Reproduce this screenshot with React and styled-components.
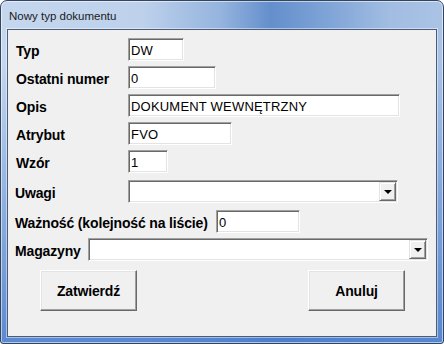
import React from 'react'
import styled, { createGlobalStyle } from 'styled-components'

const GlobalStyle = createGlobalStyle`
  html, body {
    margin: 0;
    padding: 0;
    background: #ffffff;
  }
  body {
    font-family: "Liberation Sans", Arial, sans-serif;
  }
  * {
    box-sizing: border-box;
  }
`

const Window = styled.div`
  width: 444px;
  height: 344px;
  display: flex;
  flex-direction: column;
  border: 1px solid #34465f;
  border-radius: 7px 7px 3px 3px;
  overflow: hidden;
  background:
    linear-gradient(180deg, rgba(72, 124, 204, 0) 0px, rgba(72, 124, 204, 0) 60px, rgba(72, 124, 204, 0.85) 100%),
    linear-gradient(90deg, #c5d7ee 0%, #bdd1eb 32%, #94b3de 50%, #648fcc 61%, #7fa4d7 74%, #a2bde2 88%, #aac3e5 100%);
  box-shadow: inset 0 0 0 1px rgba(255, 255, 255, 0.55);
`

const TitleBar = styled.div`
  height: 28px;
  flex-shrink: 0;
  display: flex;
  align-items: center;
  padding: 2px 0 0 8px;
  font-size: 11.5px;
  color: #1b1b1b;
`

const Client = styled.div`
  flex: 1;
  margin: 0 6px 6px 6px;
  border: 1px solid #4a5c7a;
  box-shadow: 0 0 0 1px rgba(255, 255, 255, 0.45);
  background: #f0f0f0;
  padding-top: 8px;
  display: flex;
  flex-direction: column;
  gap: 5px;
`

const Row = styled.div`
  display: flex;
  align-items: center;
  height: 23px;
  padding-left: ${p => p.$indent}px;
  margin-top: ${p => p.$push || 0}px;
`

const Label = styled.label`
  width: ${p => p.$width}px;
  flex-shrink: 0;
  padding-top: 2px;
  font-size: 14px;
  font-weight: bold;
  letter-spacing: -0.15px;
  color: #000000;
  white-space: nowrap;
`

const Sunken = styled.div`
  width: ${p => p.$width}px;
  height: 23px;
  display: flex;
  align-items: stretch;
  background: #ffffff;
  border-top: 1px solid #a0a0a0;
  border-left: 1px solid #a0a0a0;
  border-bottom: 1px solid #ffffff;
  border-right: 1px solid #ffffff;
  box-shadow: inset 1px 1px 0 #696969, inset -1px -1px 0 #e3e3e3;
`

const Field = styled.input`
  flex: 1;
  min-width: 0;
  border: none;
  outline: none;
  background: transparent;
  padding: 1px 0 0 2px;
  font-family: "Liberation Sans", Arial, sans-serif;
  font-size: 13px;
  letter-spacing: 0.2px;
  color: #000000;
`

const DropButton = styled.div`
  width: 17px;
  margin: 1px 1px 1px 0;
  display: flex;
  align-items: center;
  justify-content: center;
  background: #f0f0f0;
  border-top: 1px solid #e3e3e3;
  border-left: 1px solid #e3e3e3;
  border-bottom: 1px solid #696969;
  border-right: 1px solid #696969;
  box-shadow: inset 1px 1px 0 #ffffff, inset -1px -1px 0 #a0a0a0;
`

const Arrow = styled.span`
  width: 0;
  height: 0;
  margin-top: 1px;
  border-left: 4px solid transparent;
  border-right: 4px solid transparent;
  border-top: 4px solid #000000;
`

const ButtonBar = styled.div`
  display: flex;
  gap: 171px;
  padding-left: 32px;
  margin-top: 4px;
`

const Button = styled.button`
  width: 97px;
  height: 41px;
  padding: 0;
  background: #f0f0f0;
  border-top: 1px solid #ffffff;
  border-left: 1px solid #ffffff;
  border-bottom: 1px solid #696969;
  border-right: 1px solid #696969;
  box-shadow: inset -1px -1px 0 #a0a0a0, inset 1px 1px 0 #e3e3e3;
  font-family: "Liberation Sans", Arial, sans-serif;
  font-size: 14px;
  font-weight: bold;
  letter-spacing: -0.15px;
  color: #000000;
`

const TextRow = ({ label, value, width, labelWidth = 112, indent = 8, push }) => (
  <Row $indent={indent} $push={push}>
    <Label $width={labelWidth}>{label}</Label>
    <Sunken $width={width}>
      <Field defaultValue={value} readOnly />
    </Sunken>
  </Row>
)

const ComboRow = ({ label, width, labelWidth, indent = 7, push }) => (
  <Row $indent={indent} $push={push}>
    <Label $width={labelWidth}>{label}</Label>
    <Sunken $width={width}>
      <Field defaultValue="" readOnly />
      <DropButton>
        <Arrow />
      </DropButton>
    </Sunken>
  </Row>
)

export default function App() {
  return (
    <>
      <GlobalStyle />
      <Window>
        <TitleBar>Nowy typ dokumentu</TitleBar>
        <Client>
          <TextRow label="Typ" value="DW" width={56} />
          <TextRow label="Ostatni numer" value="0" width={88} />
          <TextRow label="Opis" value="DOKUMENT WEWNĘTRZNY" width={272} />
          <TextRow label="Atrybut" value="FVO" width={104} />
          <TextRow label="Wzór" value="1" width={40} />
          <ComboRow label="Uwagi" width={270} labelWidth={113} push={2} />
          <TextRow label="Ważność (kolejność na liście)" value="0" width={84} labelWidth={201} indent={7} push={2} />
          <ComboRow label="Magazyny" width={340} labelWidth={73} />
          <ButtonBar>
            <Button>Zatwierdź</Button>
            <Button>Anuluj</Button>
          </ButtonBar>
        </Client>
      </Window>
    </>
  )
}
